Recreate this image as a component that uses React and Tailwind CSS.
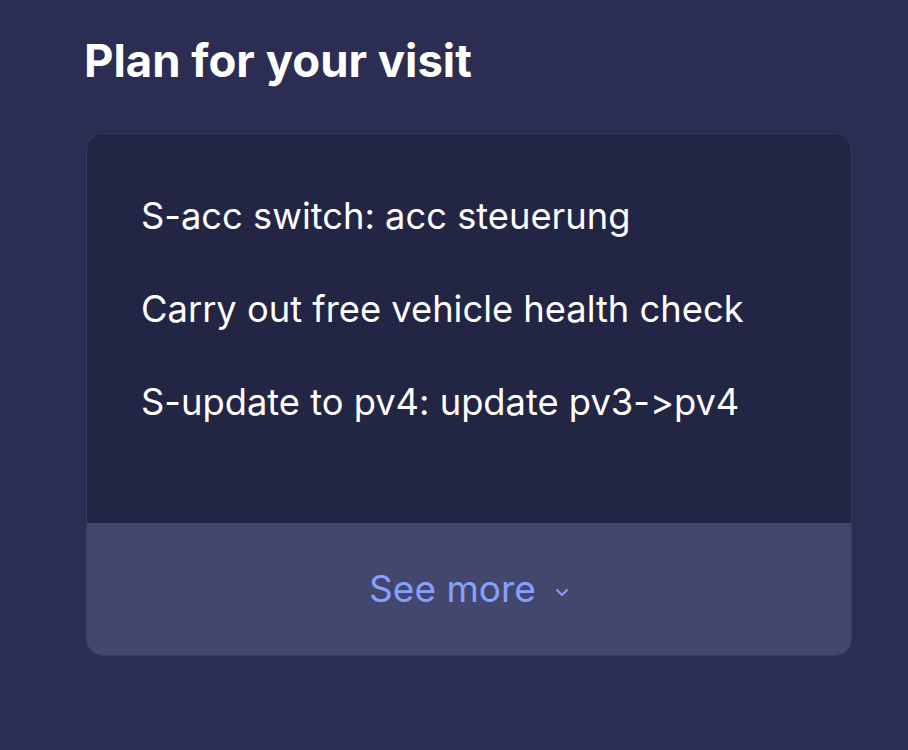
export default function App() {
  const items = [
    "S-acc switch: acc steuerung",
    "Carry out free vehicle health check",
    "S-update to pv4: update pv3->pv4",
  ];
  return (
    <div className="min-h-[750px] w-full bg-[#2b2d52] pl-[84px] pr-[56px] pt-[33px] font-['Inter',sans-serif] [font-variant-ligatures:none]">
      <h2 className="text-[45.5px] font-bold leading-[56px] text-white">Plan for your visit</h2>
      <div className="mt-[44px] ml-[2px] overflow-hidden rounded-[16px] border border-[#363a5e] bg-[#232545]">
        <ul className="flex h-[389px] flex-col gap-[49px] px-[54px] pt-[60px]">
          {items.map((t) => (
            <li key={t} className="text-[36.3px] leading-[44px] text-white">{t}</li>
          ))}
        </ul>
        <button className="flex h-[132px] w-full items-center justify-center gap-[19px] bg-[#43476e] text-[37px] text-[#86a0ff]">
          See more
          <svg width="14" height="9" viewBox="0 0 14 9" fill="none" stroke="currentColor" strokeWidth="2" strokeLinecap="round" strokeLinejoin="round" className="mt-[6px]">
            <path d="M2 2l5 5 5-5" />
          </svg>
        </button>
      </div>
    </div>
  );
}
